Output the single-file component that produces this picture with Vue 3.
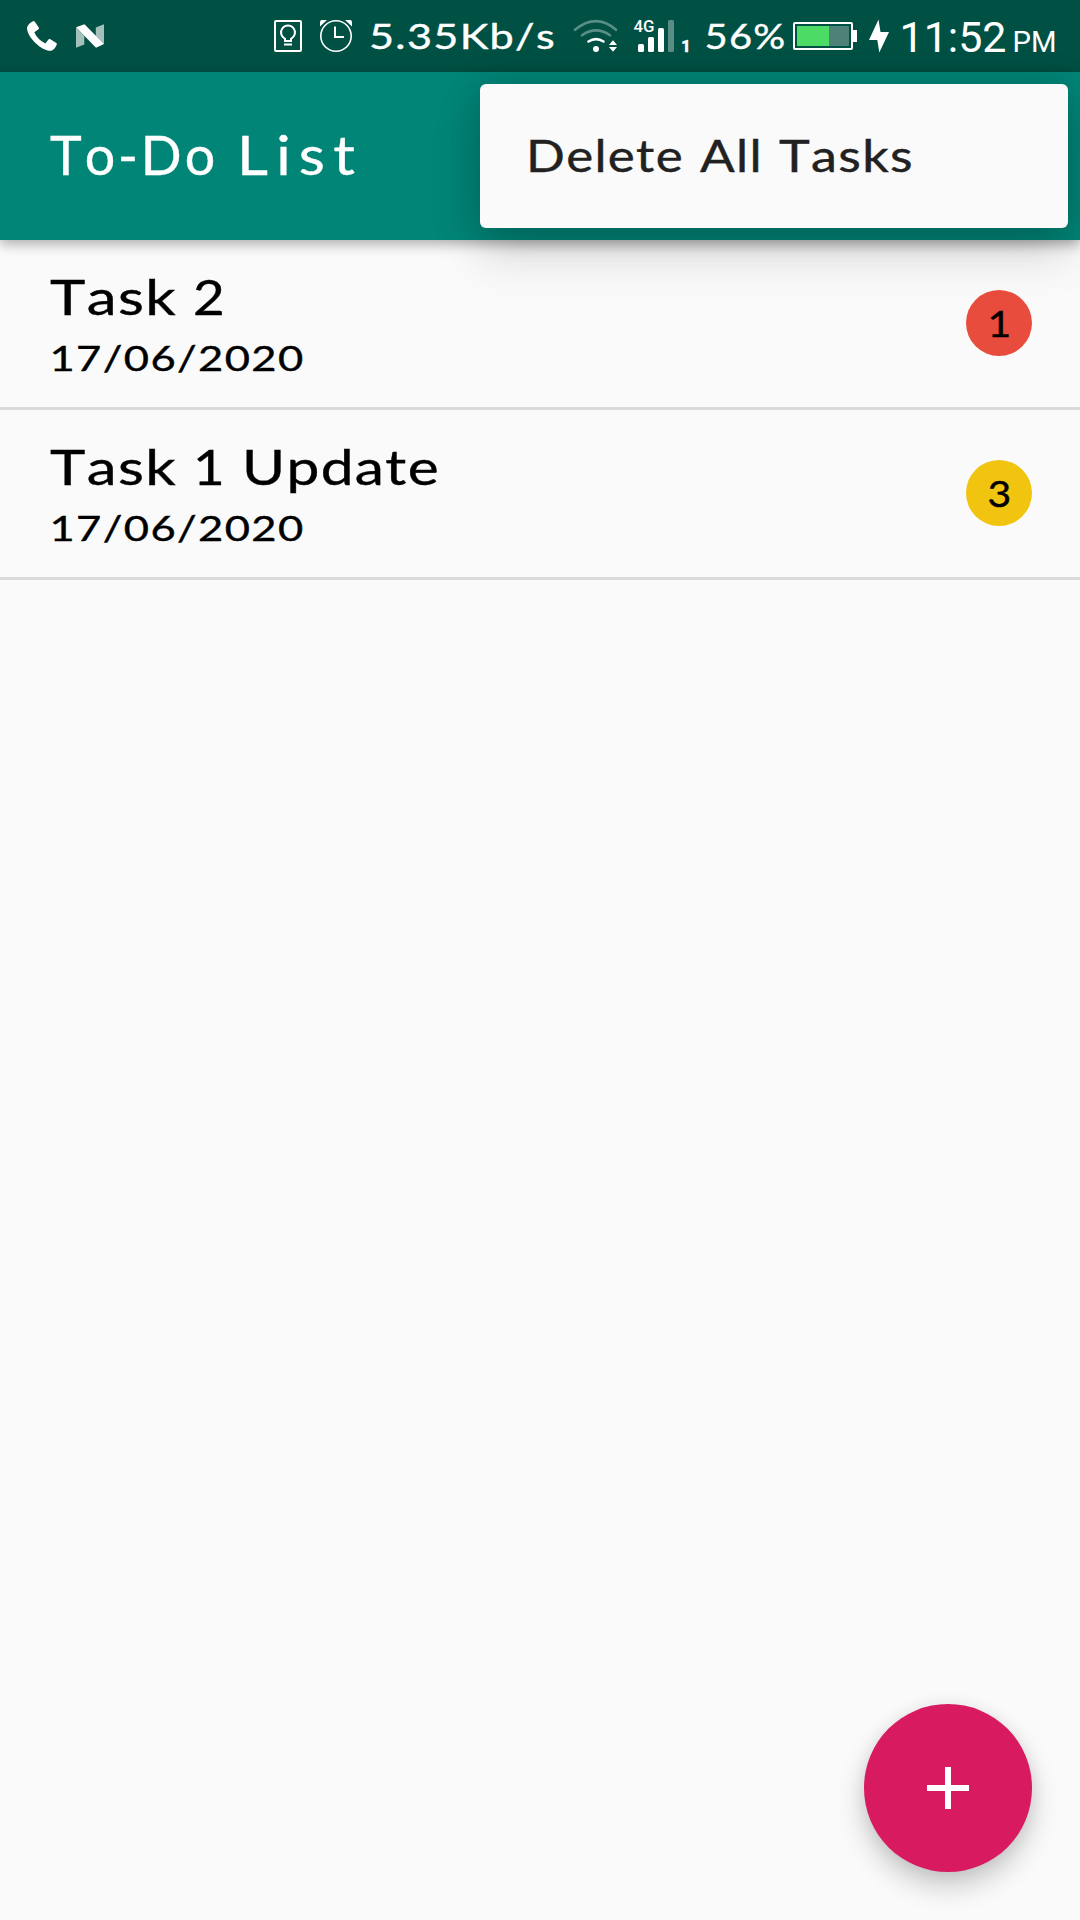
<script setup>
const title = [
  { text: 'To-Do', x: 50, len: 168, spacing: 3 },
  { text: 'List', x: 237, len: 126, spacing: 7.5 },
]

const menuWords = [
  { text: 'Delete', x: 46, len: 158 },
  { text: 'All', x: 220, len: 63 },
  { text: 'Tasks', x: 299, len: 135 },
]

const tasks = [
  {
    id: 2,
    words: [
      { text: 'Task', x: 50, len: 127 },
      { text: '2', x: 193, len: 33 },
    ],
    date: '17/06/2020',
    priority: 1,
    color: '#e74c3c',
  },
  {
    id: 1,
    words: [
      { text: 'Task', x: 50, len: 127 },
      { text: '1', x: 193, len: 33 },
      { text: 'Update', x: 242, len: 198 },
    ],
    date: '17/06/2020',
    priority: 3,
    color: '#f1c40f',
  },
]
</script>

<template>
  <div class="screen">
    <div class="status">
      <svg width="68" height="72" viewBox="0 0 68 72">
        <path fill="#fff" d="M33 21.2 Q34 20.8 34.8 21.8 L38.8 27.6 Q39.3 28.5 38.5 29.2 L34.3 32.2 Q37.5 39.5 45.4 43.5 L48.4 39.4 Q49.1 38.6 50 39.1 L56.3 43 Q57.2 43.6 56.8 44.6 Q54.8 49.5 51.5 50.8 C43 52 27 38 27 27.5 Q28.5 23.3 33 21.2Z" />
      </svg>
      <svg width="44" height="72" viewBox="68 0 44 72">
        <path fill="#fff" fill-opacity=".64" d="M76 27.5 L84.3 36 V44.5 L76 47.7Z M95.8 27.5 L104 24.2 V44 L95.8 36Z" />
        <path fill="#fff" d="M76 27.3 L84.5 24.2 L104 44 L96 47.7Z" />
      </svg>
      <div class="spacer"></div>
      <svg width="46" height="72" viewBox="268 0 46 72" fill="none" stroke="#fff" stroke-width="2">
        <rect x="275" y="21" width="26" height="30" rx="1" />
        <path d="M285 41 V38.8 A7 7 0 1 1 291 38.8 V41Z M284 44.5 H292" />
      </svg>
      <svg width="50" height="72" viewBox="314 0 50 72" fill="none" stroke="#fff" stroke-width="1.6">
        <circle cx="336" cy="36" r="15.2" />
        <path stroke-width="2" d="M335 26.5 V37 H344" />
        <path fill="#fff" stroke="none" d="M320 26.5 V22 Q320 20 322 20 H327Z M352 26.5 V22 Q352 20 350 20 H345Z" />
      </svg>
      <svg class="hand light" width="198" height="72" viewBox="364 0 198 72">
        <text x="369" y="49" font-size="35.5" textLength="187" lengthAdjust="spacingAndGlyphs">5.35Kb/s</text>
      </svg>
      <svg width="64" height="72" viewBox="562 0 64 72" fill="none" stroke="#fff" stroke-width="2.6" stroke-linecap="round">
        <path opacity=".35" d="M575 29.8 Q596 12.5 616 29.8 M582 35.2 Q596 25.5 610 35.2" />
        <path d="M588.5 41.5 Q596 36.7 603.5 41.5" />
        <circle cx="596" cy="49" r="3" fill="#fff" stroke="none" />
        <path fill="#fff" stroke="none" d="M609 45 L613 40.3 L617 45Z M609 47 H617 L613 51.8Z" />
      </svg>
      <svg width="72" height="72" viewBox="626 0 72 72" fill="#fff">
        <text class="roboto medium" x="633.5" y="32" font-size="16.5" textLength="21" lengthAdjust="spacingAndGlyphs">4G</text>
        <rect x="638" y="44" width="6" height="8" rx="1.5" />
        <rect x="648" y="37" width="6" height="15" rx="1.5" />
        <rect x="658" y="28" width="6" height="24" rx="1.5" />
        <rect x="668" y="20" width="6" height="32" rx="1.5" opacity=".35" />
        <text class="roboto bold" x="681.2" y="52" font-size="16.5" stroke="#fff" stroke-width=".6">1</text>
      </svg>
      <svg class="hand light" width="92" height="72" viewBox="698 0 92 72">
        <text x="704.5" y="49" font-size="35.5" textLength="82" lengthAdjust="spacingAndGlyphs">56%</text>
      </svg>
      <svg width="72" height="72" viewBox="790 0 72 72">
        <rect x="794" y="23" width="58" height="26" rx="1" fill="none" stroke="#fff" stroke-width="2" />
        <rect x="797" y="26" width="52" height="20" fill="#4e8279" />
        <rect x="797" y="26" width="32" height="20" fill="#4cdb64" />
        <rect x="853" y="30" width="4" height="12" fill="#fff" />
      </svg>
      <svg width="34" height="72" viewBox="862 0 34 72">
        <path fill="#fff" d="M878.5 19.5 L869 40 H877.3 L879.3 52.5 L889 32 H880.5Z" />
      </svg>
      <svg width="184" height="72" viewBox="896 0 184 72" fill="#fff">
        <text class="roboto" x="899.5" y="52" font-size="42" textLength="107" lengthAdjust="spacingAndGlyphs">11:52</text>
        <text class="roboto" x="1012.5" y="52" font-size="29" textLength="44" lengthAdjust="spacingAndGlyphs">PM</text>
      </svg>
    </div>

    <header class="appbar">
      <svg class="hand light" width="480" height="168" viewBox="0 72 480 168">
        <text v-for="w in title" :key="w.text" :x="w.x" y="175" font-size="55" :style="{ letterSpacing: w.spacing + 'px' }" :textLength="w.len" lengthAdjust="spacingAndGlyphs">{{ w.text }}</text>
      </svg>
      <div class="menu">
        <svg class="hand ink" width="588" height="144" viewBox="0 0 588 144">
          <text v-for="w in menuWords" :key="w.text" :x="w.x" y="88" font-size="43.5" :textLength="w.len" lengthAdjust="spacingAndGlyphs">{{ w.text }}</text>
        </svg>
      </div>
    </header>

    <main class="list">
      <div v-for="task in tasks" :key="task.id" class="row">
        <svg class="hand black" width="480" height="167" viewBox="0 0 480 167">
          <text v-for="w in task.words" :key="w.text" :x="w.x" y="75" font-size="49" :textLength="w.len" lengthAdjust="spacingAndGlyphs">{{ w.text }}</text>
          <text x="49.5" y="130.5" font-size="35.5" textLength="255" lengthAdjust="spacingAndGlyphs">{{ task.date }}</text>
        </svg>
        <div class="badge" :style="{ background: task.color }">
          <svg class="hand black" width="66" height="66" viewBox="0 0 66 66">
            <text x="21.5" y="47" font-size="36" textLength="25" lengthAdjust="spacingAndGlyphs">{{ task.priority }}</text>
          </svg>
        </div>
      </div>
    </main>

    <button class="fab" aria-label="Add task">
      <svg width="42" height="42" viewBox="0 0 42 42"><path fill="#fff" d="M18 0 H24 V18 H42 V24 H24 V42 H18 V24 H0 V18 H18Z" /></svg>
    </button>
  </div>
</template>

<style>
body {
  background: #fafafa;
}
</style>

<style scoped>
.screen {
  position: relative;
  width: 1080px;
  height: 1920px;
  overflow: hidden;
  background: #fafafa;
  display: flex;
  flex-direction: column;
}
svg {
  display: block;
  flex: none;
}
.status {
  display: flex;
  height: 72px;
  background: #005044;
}
.spacer {
  flex: 1;
}
.hand {
  font-family: Lato, "Open Sans", sans-serif;
  font-kerning: none;
  letter-spacing: 0.07em;
  stroke-width: 0.4;
}
.light {
  fill: #fff;
  stroke: #fff;
}
.ink {
  fill: #212121;
  stroke: #212121;
}
.black {
  fill: #000;
  stroke: #000;
}
.roboto {
  font-family: Roboto, sans-serif;
}
.medium {
  font-weight: 500;
}
.bold {
  font-weight: 700;
}
.appbar {
  position: relative;
  z-index: 2;
  height: 168px;
  background: #008577;
  box-shadow: 0 4px 12px rgba(0, 0, 0, 0.32);
}
.menu {
  position: absolute;
  top: 12px;
  right: 12px;
  width: 588px;
  height: 144px;
  border-radius: 6px;
  background: #fafafa;
  box-shadow: 0 24px 48px rgba(0, 0, 0, 0.17), 0 0 36px rgba(0, 0, 0, 0.15);
}
.row {
  display: flex;
  justify-content: space-between;
  align-items: center;
  height: 167px;
  padding-right: 48px;
  border-bottom: 3px solid #dadada;
}
.badge {
  width: 66px;
  height: 66px;
  margin-bottom: 2px;
  border-radius: 50%;
}
.fab {
  position: absolute;
  right: 48px;
  bottom: 48px;
  width: 168px;
  height: 168px;
  padding: 0;
  border: 0;
  border-radius: 50%;
  background: #d81b60;
  display: flex;
  align-items: center;
  justify-content: center;
  box-shadow: 0 14px 28px rgba(0, 0, 0, 0.2), 0 2px 16px rgba(0, 0, 0, 0.07);
}
</style>
